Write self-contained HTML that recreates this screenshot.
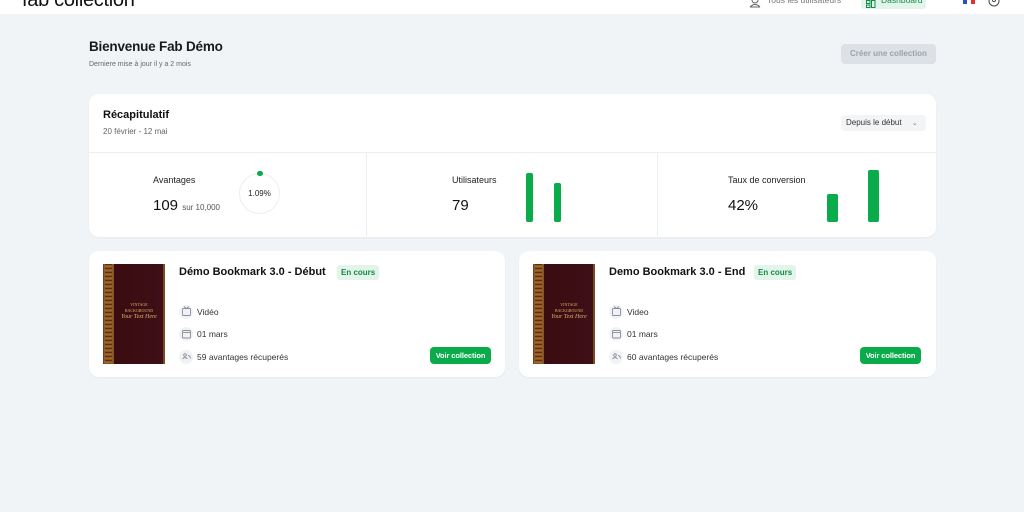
<!DOCTYPE html>
<html><head><meta charset="utf-8">
<style>
*{margin:0;padding:0;box-sizing:border-box}
body{width:1024px;height:512px;overflow:hidden;background:#f1f4f7;font-family:"Liberation Sans",sans-serif;color:#111;position:relative}
.a{position:absolute}
.card{position:absolute;background:#fff;border-radius:10px;box-shadow:0 1px 2px rgba(0,0,0,.04)}
.bar{position:absolute;background:#0aab4b;border-radius:2px}
.cover{position:absolute;width:62px;height:100px;background:linear-gradient(90deg,#6b2a1a 0,#a0702a 2px,#4a1210 3px,#5a1a14 9px,#c99a3a 10px,#3a0c10 11px,#3e0f16 60px,#b88a30 61px,#3a0c10 62px)}
.cover:before{content:"";position:absolute;left:2px;top:0;width:7px;height:100%;background:repeating-linear-gradient(0deg,#7a4a1c 0,#a8742c 2px,#4a1410 4px)}
.cover .t{position:absolute;left:14px;top:38px;width:44px;font-family:"Liberation Serif",serif;font-size:4px;color:#d8b26a;text-align:center;line-height:6px}
.cover .t i{font-size:6px}
.ic{position:absolute;width:14px;height:14px;border-radius:50%;background:#f0f2f5}
.row{position:absolute;font-size:8.5px;color:#333}
.badge{position:absolute;background:#e3f4ea;color:#138a48;font-size:8px;font-weight:bold;padding:3px 4px;border-radius:3px}
.btn{position:absolute;background:#0aab4b;color:#fff;font-size:7.5px;font-weight:bold;border-radius:4px;width:61px;height:17px;line-height:17px;text-align:center;letter-spacing:-0.1px}
</style></head><body>
<div class="a" style="left:0;top:0;width:1024px;height:14px;background:#fff"></div>
<div class="a" style="left:22px;top:-11px;font-family:'Liberation Sans',sans-serif;font-size:20px;color:#111;letter-spacing:-0.3px">fab collection</div>
<svg class="a" style="left:749px;top:0" width="14" height="8" viewBox="0 0 14 8"><circle cx="6" cy="0" r="3" fill="none" stroke="#666"/><path d="M1 7 Q6 2 11 7 M1 7h10" stroke="#666" fill="none"/></svg>
<div class="a" style="left:767px;top:-5px;font-size:8.5px;color:#777">Tous les utilisateurs</div>
<div class="a" style="left:861px;top:-4px;width:65px;height:13px;background:#e3f4ea;border-radius:3px"></div>
<svg class="a" style="left:866px;top:0" width="10" height="8"><rect x="0.5" y="0.5" width="3.5" height="3" fill="none" stroke="#138a48"/><rect x="5.5" y="0.5" width="3.5" height="7" fill="none" stroke="#138a48"/><rect x="0.5" y="5" width="3.5" height="2.5" fill="none" stroke="#138a48"/></svg>
<div class="a" style="left:881px;top:-5px;font-size:8.5px;color:#138a48">Dashboard</div>
<div class="a" style="left:963px;top:0;width:4px;height:4px;background:#2a4fbf"></div>
<div class="a" style="left:967px;top:0;width:4px;height:4px;background:#fff"></div>
<div class="a" style="left:971px;top:0;width:4px;height:4px;background:#e03030"></div>
<svg class="a" style="left:988px;top:-4px" width="12" height="11"><circle cx="6" cy="5" r="5" fill="none" stroke="#444"/><circle cx="6" cy="4" r="1.6" fill="none" stroke="#444"/></svg>

<div class="a" style="left:89px;top:39px;font-size:13.5px;font-weight:bold;color:#1a1a1a;letter-spacing:-0.2px">Bienvenue Fab Démo</div>
<div class="a" style="left:89px;top:61px;font-size:7px;color:#666">Derniere mise à jour il y a 2 mois</div>
<div class="a" style="left:841px;top:44px;width:95px;height:20px;background:#dde1e6;border-radius:4px;color:#9aa1ab;font-size:8px;font-weight:bold;text-align:center;line-height:20px">Créer une collection</div>

<div class="card" style="left:89px;top:94px;width:847px;height:143px"></div>
<div class="a" style="left:103px;top:109px;font-size:11px;font-weight:bold">Récapitulatif</div>
<div class="a" style="left:103px;top:127px;font-size:8px;color:#666">20 février - 12 mai</div>
<div class="a" style="left:841px;top:115px;width:85px;height:16px;background:#f3f4f6;border-radius:4px;font-size:8px;color:#333;line-height:16px;padding-left:5px">Depuis le début <span style="margin-left:8px;color:#777;font-size:7px">⌄</span></div>
<div class="a" style="left:89px;top:152px;width:847px;height:1px;background:#eceef1"></div>
<div class="a" style="left:366px;top:153px;width:1px;height:83px;background:#eceef1"></div>
<div class="a" style="left:657px;top:153px;width:1px;height:83px;background:#eceef1"></div>

<div class="a" style="left:153px;top:175px;font-size:9px;color:#222">Avantages</div>
<div class="a" style="left:153px;top:197px;font-size:15px;color:#111">109 <span style="font-size:8px;color:#555">sur 10,000</span></div>
<div class="a" style="left:239px;top:173px;width:41px;height:41px;border:1px solid #eee;border-radius:50%"></div>
<div class="a" style="left:257px;top:171px;width:6px;height:5px;background:#0aab4b;border-radius:3px"></div>
<div class="a" style="left:239px;top:189px;width:41px;text-align:center;font-size:8px;color:#222">1.09%</div>

<div class="a" style="left:452px;top:175px;font-size:9px;color:#222">Utilisateurs</div>
<div class="a" style="left:452px;top:197px;font-size:15px">79</div>
<div class="bar" style="left:526px;top:173px;width:7px;height:49px"></div>
<div class="bar" style="left:554px;top:183px;width:7px;height:39px"></div>

<div class="a" style="left:728px;top:175px;font-size:9px;color:#222">Taux de conversion</div>
<div class="a" style="left:728px;top:197px;font-size:15px">42%</div>
<div class="bar" style="left:827px;top:194px;width:11px;height:28px"></div>
<div class="bar" style="left:868px;top:170px;width:11px;height:52px"></div>

<div class="card" style="left:89px;top:251px;width:416px;height:126px"></div>
<div class="card" style="left:519px;top:251px;width:417px;height:126px"></div>

<div class="cover" style="left:103px;top:264px"><div class="t">VINTAGE BACKGROUND<br><i>Your Text Here</i></div></div>
<div class="a" style="left:179px;top:266px;font-size:11px;font-weight:bold">Démo Bookmark 3.0 - Début</div>
<div class="badge" style="left:337px;top:265px">En cours</div>
<div class="ic" style="left:179px;top:305px"></div>
<div class="row" style="left:197px;top:307px">Vidéo</div>
<div class="ic" style="left:179px;top:327px"></div>
<div class="row" style="left:197px;top:329px">01 mars</div>
<div class="ic" style="left:179px;top:350px"></div>
<div class="row" style="left:197px;top:352px">59 avantages récuperés</div>
<div class="btn" style="left:430px;top:347px">Voir collection</div>

<div class="cover" style="left:533px;top:264px"><div class="t">VINTAGE BACKGROUND<br><i>Your Text Here</i></div></div>
<div class="a" style="left:609px;top:266px;font-size:11px;font-weight:bold">Demo Bookmark 3.0 - End</div>
<div class="badge" style="left:754px;top:265px">En cours</div>
<div class="ic" style="left:609px;top:305px"></div>
<div class="row" style="left:627px;top:307px">Video</div>
<div class="ic" style="left:609px;top:327px"></div>
<div class="row" style="left:627px;top:329px">01 mars</div>
<div class="ic" style="left:609px;top:350px"></div>
<div class="row" style="left:627px;top:352px">60 avantages récuperés</div>
<div class="btn" style="left:860px;top:347px">Voir collection</div>

<svg class="a" style="left:0;top:0" width="1024" height="512" fill="none" stroke="#8a8f98" stroke-width="0.9">
<rect x="182.5" y="308.5" width="8" height="7" rx="1"/><path d="M184 306.5l2.5 2 2.5-2"/>
<rect x="182.5" y="330.5" width="8" height="7.5" rx="1"/><path d="M182.5 332.5h8"/>
<circle cx="185" cy="355" r="1.3"/><path d="M182.5 359q2.5-3 5 0M188 355.5q2 0 2.5 3"/>
<rect x="612.5" y="308.5" width="8" height="7" rx="1"/><path d="M614 306.5l2.5 2 2.5-2"/>
<rect x="612.5" y="330.5" width="8" height="7.5" rx="1"/><path d="M612.5 332.5h8"/>
<circle cx="615" cy="355" r="1.3"/><path d="M612.5 359q2.5-3 5 0M618 355.5q2 0 2.5 3"/>
</svg>
</body></html>
